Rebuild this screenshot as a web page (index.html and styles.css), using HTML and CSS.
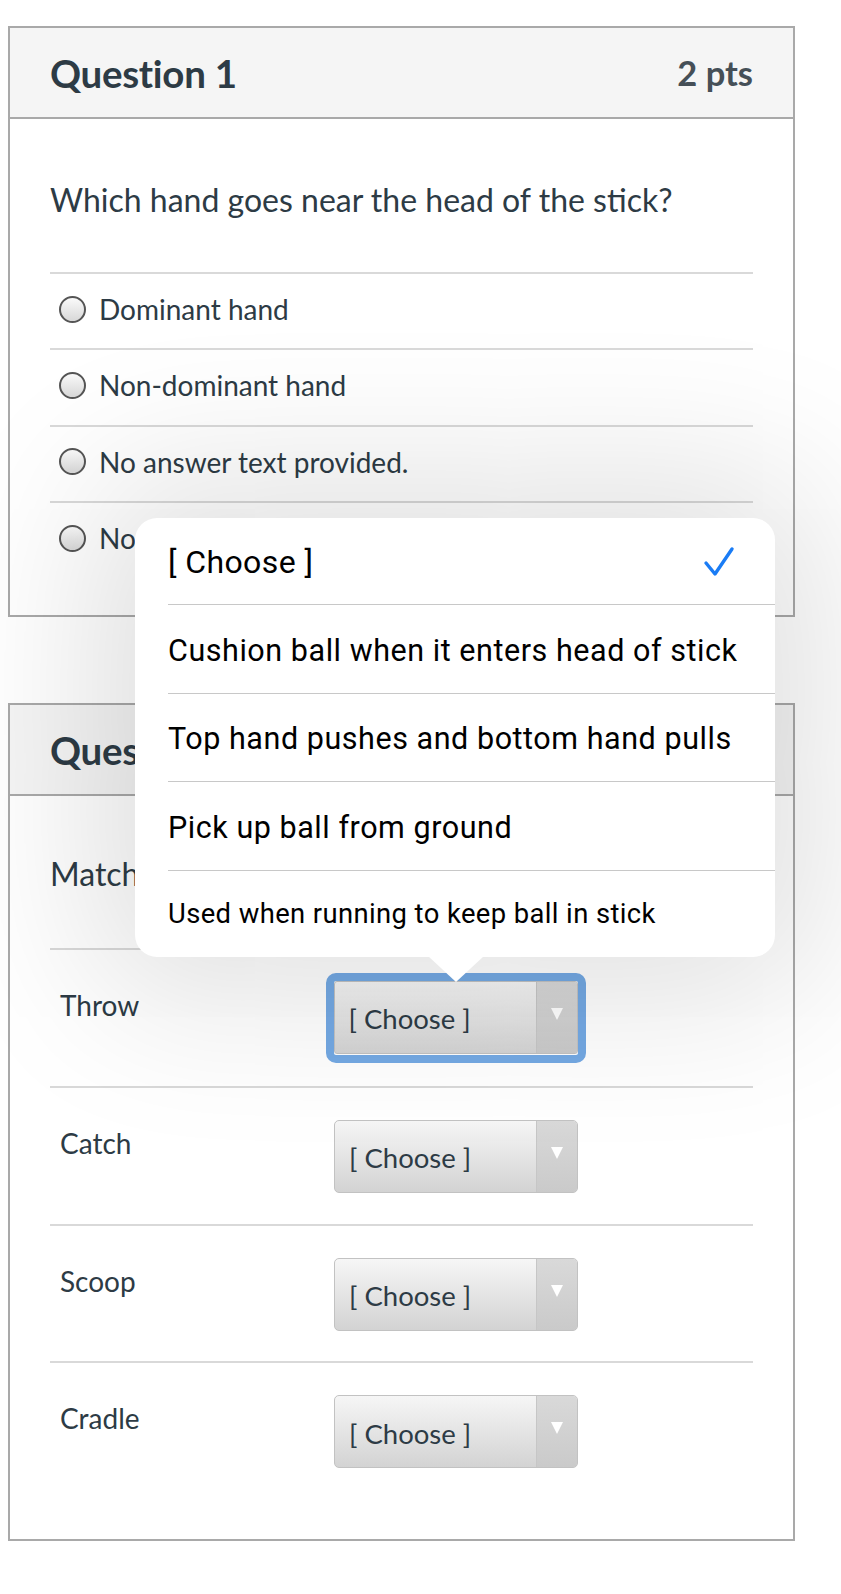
FILE: index.html
```html
<!DOCTYPE html>
<html>
<head>
<meta charset="utf-8">
<link rel="stylesheet" href="styles.css">
</head>
<body>
<div class="page">
  <section class="card">
    <header class="card-head">
      <h2 class="title">Question 1</h2>
      <span class="pts">2 pts</span>
    </header>
    <div class="card-body">
      <p class="qtext">Which hand goes near the head of the stick?</p>
      <ul class="answers">
        <li class="answer"><span class="radio"></span>Dominant hand</li>
        <li class="answer"><span class="radio"></span>Non-dominant hand</li>
        <li class="answer"><span class="radio"></span>No answer text provided.</li>
        <li class="answer"><span class="radio"></span>No answer text provided.</li>
      </ul>
    </div>
  </section>

  <section class="card card-2">
    <header class="card-head">
      <h2 class="title">Question 2</h2>
      <span class="pts">4 pts</span>
    </header>
    <div class="card-body body-2">
      <p class="qtext">Match the skill with its description.</p>
      <div class="match">
        <div class="mrow"><span class="mlabel">Throw</span>
          <div class="focus"><div class="select"><span class="sel-text">[ Choose ]</span><span class="sel-arrow"><span class="tri"></span></span></div></div>
        </div>
        <div class="mrow"><span class="mlabel">Catch</span>
          <div class="select"><span class="sel-text">[ Choose ]</span><span class="sel-arrow"><span class="tri"></span></span></div>
        </div>
        <div class="mrow"><span class="mlabel">Scoop</span>
          <div class="select"><span class="sel-text">[ Choose ]</span><span class="sel-arrow"><span class="tri"></span></span></div>
        </div>
        <div class="mrow"><span class="mlabel">Cradle</span>
          <div class="select"><span class="sel-text">[ Choose ]</span><span class="sel-arrow"><span class="tri"></span></span></div>
        </div>
      </div>
    </div>
  </section>

  <div class="popover">
    <div class="opt opt-first"><span>[ Choose ]</span>
      <svg class="check" width="32" height="32" viewBox="0 0 32 32"><path d="M3 17 L12 28 L29 3" fill="none" stroke="#1a7cf5" stroke-width="3.4" stroke-linecap="round" stroke-linejoin="round"/></svg>
    </div>
    <div class="opt">Cushion ball when it enters head of stick</div>
    <div class="opt">Top hand pushes and bottom hand pulls</div>
    <div class="opt">Pick up ball from ground</div>
    <div class="opt opt-small">Used when running to keep ball in stick</div>
  </div>
</div>
</body>
</html>
```

FILE: styles.css
```css
* { box-sizing: border-box; }
html, body { margin: 0; padding: 0; background: #fff; overflow: hidden; }
body {
  font-family: Lato, "Liberation Sans", sans-serif;
  color: #2d3b45;
}
.page {
  position: relative;
  width: 841px;
  height: 1594px;
  overflow: hidden;
  padding: 26px 0 0 8px;
}
.card {
  width: 787px;
  border: 2px solid #a9a9a9;
  background: #fff;
}
.card-2 { margin-top: 86px; }
.card-head {
  height: 91px;
  background: #f5f5f5;
  border-bottom: 2px solid #a9a9a9;
  display: flex;
  align-items: center;
  justify-content: space-between;
  padding: 0 40px 0 40px;
}
.title {
  margin: 0;
  font-size: 38.5px;
  font-weight: 700;
  letter-spacing: -0.3px;
}
.pts {
  font-size: 34.5px;
  font-weight: 700;
  color: #454f57;
}
.card-body {
  padding: 63px 40px 38px 40px;
}
.qtext {
  margin: 0 0 54px 0;
  font-size: 32px;
  line-height: 36px;
}
.answers { list-style: none; margin: 0; padding: 0; }
.answer {
  height: 76.3px;
  border-top: 2px solid #d9d9d9;
  display: flex;
  align-items: center;
  padding: 0 0 4px 9px;
  font-size: 28px;
}
.radio {
  width: 27px;
  height: 27px;
  border-radius: 50%;
  border: 2px solid #555;
  background: linear-gradient(#fafafa, #d8d8d8);
  margin-right: 13px;
  flex: none;
}
.body-2 { padding-top: 60px; padding-bottom: 40px; }
.body-2 .qtext { margin-bottom: 56px; }
.mrow {
  height: 137.7px;
  border-top: 2px solid #d9d9d9;
  display: flex;
  align-items: flex-start;
  padding: 0 0 0 10px;
}
.mlabel {
  width: 274px;
  flex: none;
  font-size: 28px;
  padding-top: 38px;
}
.select {
  width: 244px;
  height: 73px;
  margin-top: 32px;
  border: 1px solid #c2c2c2;
  border-radius: 5px;
  background: linear-gradient(#f6f6f6, #d3d3d3);
  display: flex;
  align-items: stretch;
  overflow: hidden;
}
.sel-text {
  flex: 1;
  display: flex;
  align-items: center;
  padding: 3px 0 0 14px;
  font-size: 27.5px;
  color: #2d3b45;
}
.sel-arrow {
  width: 41px;
  flex: none;
  border-left: 1px solid #c6c6c6;
  background: linear-gradient(#d9d9d9, #cacaca);
  display: flex;
  justify-content: center;
  padding-top: 26px;
}
.tri {
  width: 0; height: 0;
  border-left: 6.5px solid transparent;
  border-right: 6.5px solid transparent;
  border-top: 12px solid #fff;
}
.focus {
  margin-top: 22.5px;
  margin-left: -8.5px;
  border: 8.5px solid #74a9e4;
  border-radius: 10px;
  height: 90px;
}
.focus .select { margin-top: 0; border-radius: 3px; height: 73px; }
.popover {
  position: absolute;
  left: 135px;
  top: 518px;
  width: 640px;
  height: 439px;
  background: #fff;
  border-radius: 22px;
  box-shadow: 0 0 160px 40px rgba(0,0,0,0.13);
  font-family: Roboto, "Liberation Sans", sans-serif;
  color: #000;
}
.popover::after {
  content: "";
  position: absolute;
  left: 293px;
  bottom: -25px;
  width: 0; height: 0;
  border-left: 28px solid transparent;
  border-right: 28px solid transparent;
  border-top: 26px solid #fff;
}
.opt {
  height: 88.5px;
  margin-left: 33px;
  border-top: 1px solid #c8c8c8;
  display: flex;
  align-items: center;
  justify-content: space-between;
  padding-right: 40px;
  font-size: 30.5px;
  letter-spacing: 0.55px;
  padding-top: 2px;
  white-space: nowrap;
}
.opt-first { border-top: none; height: 86.3px; font-size: 32px; letter-spacing: 0.4px; }
.opt-small { font-size: 27.4px; letter-spacing: 0.4px; height: 87.5px; padding-top: 0; }
.check { flex: none; }
```
